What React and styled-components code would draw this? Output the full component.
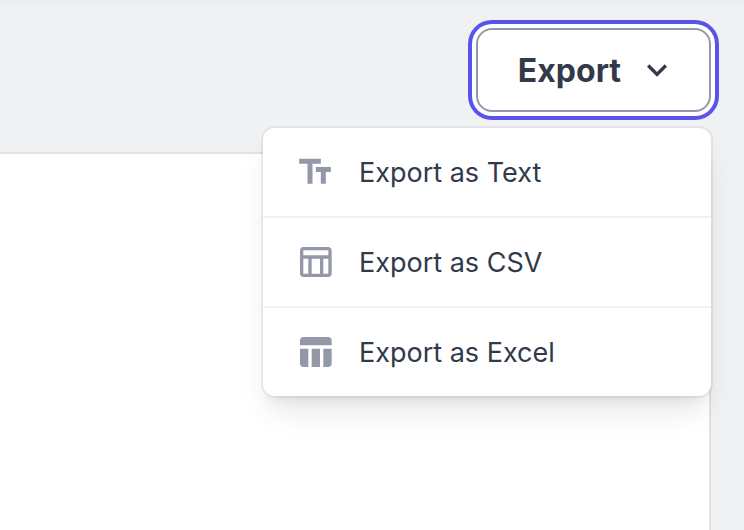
import React, { useState } from "react";
import styled, { createGlobalStyle } from "styled-components";
import {
  MdExpandMore,
  MdOutlineTableChart,
  MdTableChart,
  MdTextFields,
} from "react-icons/md";

const GlobalStyle = createGlobalStyle`
  * {
    box-sizing: border-box;
  }

  body {
    margin: 0;
    background: #f0f1f3;
    color: #323a49;
    font-family: Inter, "Liberation Sans", sans-serif;
  }
`;

const Root = styled.div`
  display: flex;
  flex-direction: column;
  min-height: 100vh;
  padding-right: 33px;
  box-shadow: inset 0 8px 8px -8px rgba(0, 0, 0, 0.04);
`;

const Toolbar = styled.header`
  display: flex;
  justify-content: flex-end;
  padding: 28px 0 40px;
`;

const Content = styled.main`
  flex: 1;
  background: #ffffff;
  border-top: 2px solid #dfe1e6;
  border-right: 2px solid #dfe1e6;
`;

const Dropdown = styled.div`
  position: relative;
`;

const Label = styled.span`
  padding-top: 2px;
`;

const ExportButton = styled.button`
  display: flex;
  align-items: center;
  gap: 16px;
  height: 84px;
  padding: 0 32px 0 40px;
  background: #ffffff;
  border: 2px solid #9298a8;
  border-radius: 16px;
  box-shadow: ${({ $open }) =>
    $open ? "0 0 0 4px #ffffff, 0 0 0 8px #5a53ea" : "none"};
  color: inherit;
  font-family: inherit;
  font-size: 32px;
  font-weight: 700;
  line-height: 40px;
  outline: none;
  cursor: pointer;
`;

const Menu = styled.div`
  position: absolute;
  top: 100%;
  right: 0;
  z-index: 1;
  width: 448px;
  margin-top: 16px;
  background: #ffffff;
  border-radius: 12px;
  box-shadow:
    0 0 0 2px rgba(0, 0, 0, 0.05),
    0 20px 30px -6px rgba(0, 0, 0, 0.1),
    0 8px 12px -4px rgba(0, 0, 0, 0.06);
`;

const MenuItem = styled.button`
  display: flex;
  align-items: center;
  gap: 24px;
  width: 100%;
  height: 88px;
  padding: 0 32px;
  background: none;
  border: none;
  color: inherit;
  font-family: inherit;
  font-size: 27px;
  line-height: 40px;
  cursor: pointer;

  & + & {
    height: 90px;
    border-top: 2px solid #f0f1f3;
  }

  svg {
    color: #9298a8;
  }
`;

const exportOptions = [
  { label: "Export as Text", icon: MdTextFields },
  { label: "Export as CSV", icon: MdOutlineTableChart },
  { label: "Export as Excel", icon: MdTableChart },
];

export default function App() {
  const [open, setOpen] = useState(true);

  const handleToggle = () => {
    setOpen(!open);
  };

  return (
    <Root>
      <GlobalStyle />
      <Toolbar>
        <Dropdown>
          <ExportButton
            type="button"
            aria-haspopup="menu"
            aria-expanded={open}
            $open={open}
            onClick={handleToggle}
          >
            <Label>Export</Label>
            <MdExpandMore size="40px" />
          </ExportButton>
          {open && (
            <Menu role="menu">
              {exportOptions.map(({ label, icon: Icon }) => (
                <MenuItem
                  key={label}
                  type="button"
                  role="menuitem"
                  onClick={handleToggle}
                >
                  <Icon size="40px" />
                  <Label>{label}</Label>
                </MenuItem>
              ))}
            </Menu>
          )}
        </Dropdown>
      </Toolbar>
      <Content />
    </Root>
  );
}
